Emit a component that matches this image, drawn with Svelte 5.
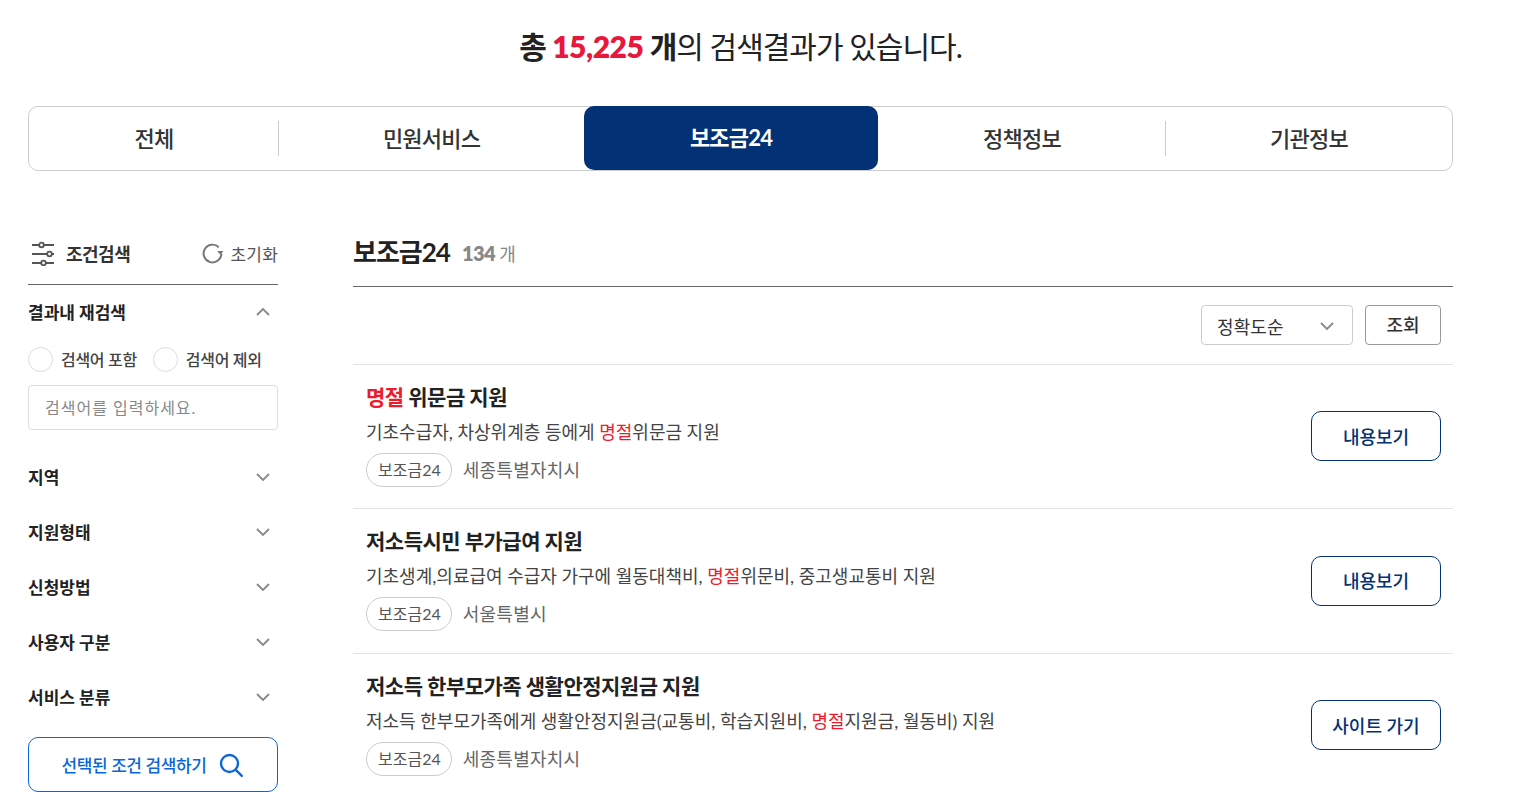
<script>
  const tabs = ['전체', '민원서비스', '보조금24', '정책정보', '기관정보'];
  const filters = ['지역', '지원형태', '신청방법', '사용자 구분', '서비스 분류'];
  const results = [
    {
      title: [['명절', true], [' 위문금 지원', false]],
      desc: [['기초수급자, 차상위계층 등에게 ', false], ['명절', true], ['위문금 지원', false]],
      org: '세종특별자치시',
      action: '내용보기'
    },
    {
      title: [['저소득시민 부가급여 지원', false]],
      desc: [['기초생계,의료급여 수급자 가구에 월동대책비, ', false], ['명절', true], ['위문비, 중고생교통비 지원', false]],
      org: '서울특별시',
      action: '내용보기'
    },
    {
      title: [['저소득 한부모가족 생활안정지원금 지원', false]],
      desc: [['저소득 한부모가족에게 생활안정지원금(교통비, 학습지원비, ', false], ['명절', true], ['지원금, 월동비) 지원', false]],
      org: '세종특별자치시',
      action: '사이트 가기'
    }
  ];
</script>

<div class="page">
  <h1><b>총 <em>15,225</em> 개</b>의 검색결과가 있습니다.</h1>

  <nav class="tabs">
    {#each tabs as tab, i}
      <div class="tab" class:active={i === 2} class:sep={i === 1 || i === 4}>{tab}</div>
    {/each}
  </nav>

  <div class="columns">
    <aside>
      <div class="side-head">
        <svg class="sliders" width="26" height="26" viewBox="0 -1 26 26" fill="none" stroke="#555" stroke-width="2">
          <path d="M2 4h7M14 4h10M2 13h15M22 13h2M2 22h9M16 22h8" />
          <circle cx="11.500" cy="4" r="2.300" stroke-width="1.800" />
          <circle cx="19.500" cy="13" r="2.300" stroke-width="1.800" />
          <circle cx="13.500" cy="22" r="2.300" stroke-width="1.800" />
        </svg>
        <strong>조건검색</strong>
        <span class="reset">
          <svg width="23" height="23" viewBox="0 0 22 22" fill="none">
            <path d="M17 5A8.500 8.500 0 1 0 19.500 11" stroke="#777" stroke-width="1.900" />
            <path d="M15.500 8.500h6l-3 3.800z" fill="#777" />
          </svg>
          초기화
        </span>
      </div>

      <div class="filter first">
        <span>결과내 재검색</span>
        <svg width="16" height="10" viewBox="0 0 16 10" fill="none" stroke="#888" stroke-width="1.800"><path d="M2 8l6-6 6 6" /></svg>
      </div>
      <div class="radios">
        <i class="radio"></i><span>검색어 포함</span>
        <i class="radio second"></i><span>검색어 제외</span>
      </div>
      <div class="search-input">검색어를 입력하세요.</div>

      <div class="filter-list">
        {#each filters as f}
          <div class="filter">
            <span>{f}</span>
            <svg width="16" height="10" viewBox="0 0 16 10" fill="none" stroke="#888" stroke-width="1.800"><path d="M2 2l6 6 6-6" /></svg>
          </div>
        {/each}
      </div>

      <button class="apply">
        선택된 조건 검색하기
        <svg width="26" height="26" viewBox="0 0 26 26" fill="none" stroke="#0b66d8" stroke-width="2.400" stroke-linecap="round">
          <circle cx="11.500" cy="11.500" r="8.500" />
          <path d="M17.800 17.800l6 6" />
        </svg>
      </button>
    </aside>

    <main>
      <div class="main-head">
        <h2>보조금24</h2>
        <span class="count">134 <small>개</small></span>
      </div>

      <div class="sort-bar">
        <div class="select">
          정확도순
          <svg width="16" height="10" viewBox="0 0 16 10" fill="none" stroke="#888" stroke-width="1.800"><path d="M2 2l6 6 6-6" /></svg>
        </div>
        <button class="lookup">조회</button>
      </div>

      {#each results as r}
        <article>
          <div class="body">
            <h3>{#each r.title as [t, hit]}{#if hit}<mark>{t}</mark>{:else}{t}{/if}{/each}</h3>
            <p>{#each r.desc as [t, hit]}{#if hit}<mark>{t}</mark>{:else}{t}{/if}{/each}</p>
            <div class="meta">
              <span class="chip">보조금24</span>
              <span class="org">{r.org}</span>
            </div>
          </div>
          <button class="action">{r.action}</button>
        </article>
      {/each}
    </main>
  </div>
</div>

<style>
  :global(body) {
    margin: 0;
    background: #fff;
  }

  .page {
    box-sizing: border-box;
    width: 1425px;
    height: 792px;
    margin-left: 28px;
    overflow: hidden;
    font-family: Lato, "Noto Sans CJK KR", sans-serif;
    color: #222;
    letter-spacing: -0.5px;
  }

  h1 {
    margin: 0;
    height: 106px;
    padding-top: 26px;
    box-sizing: border-box;
    text-align: center;
    font-size: 30px;
    line-height: 40px;
    font-weight: 400;
    letter-spacing: -1px;
  }

  h1 b {
    font-weight: 700;
  }

  h1 em {
    font-style: normal;
    font-weight: 800;
    letter-spacing: -0.500px;
    color: #e8173c;
  }

  .tabs {
    display: grid;
    grid-template-columns: 250px 305px 294px 288px 1fr;
    height: 65px;
    box-sizing: border-box;
    border: 1px solid #ccc;
    border-radius: 10px;
  }

  .tab {
    position: relative;
    display: flex;
    align-items: center;
    justify-content: center;
    padding-bottom: 4px;
    font-size: 22px;
    font-weight: 500;
    color: #333;
    letter-spacing: -0.8px;
  }

  .tab.active {
    margin-top: -1px;
    background: #033176;
    color: #fff;
    border-radius: 10px;
    font-weight: 700;
  }

  .tab.sep::before {
    content: "";
    position: absolute;
    left: -1px;
    top: 14px;
    bottom: 14px;
    width: 1px;
    background: #ccc;
  }

  .columns {
    display: flex;
    gap: 75px;
    padding-top: 60px;
  }

  aside {
    flex: 0 0 250px;
  }

  .side-head {
    display: flex;
    align-items: center;
    height: 54px;
    border-bottom: 1px solid #666;
    box-sizing: border-box;
    padding: 0 0 10px 2px;
  }

  .side-head strong {
    margin-left: 10px;
    font-size: 18px;
    font-weight: 700;
    color: #333;
  }

  .reset {
    display: flex;
    align-items: center;
    gap: 6px;
    margin-left: auto;
    padding-top: 2px;
    font-size: 17px;
    letter-spacing: 0.200px;
    color: #555;
  }

  .filter {
    display: flex;
    justify-content: space-between;
    align-items: center;
    height: 55px;
    padding-right: 7px;
    font-size: 17px;
    font-weight: 700;
    letter-spacing: 0;
    color: #222;
  }

  .filter.first {
    height: 53px;
  }

  .radios {
    display: flex;
    align-items: center;
    height: 24px;
    margin-top: 9px;
    font-size: 16px;
    font-weight: 500;
    letter-spacing: -0.300px;
    color: #444;
  }

  .radio {
    box-sizing: border-box;
    width: 25px;
    height: 25px;
    margin-right: 8px;
    border: 1px solid #ddd;
    border-radius: 50%;
  }

  .radio.second {
    margin-left: 16px;
    margin-right: 8px;
  }

  .search-input {
    box-sizing: border-box;
    height: 45px;
    margin-top: 14px;
    padding: 0 0 2px 16px;
    display: flex;
    align-items: center;
    border: 1px solid #ddd;
    border-radius: 4px;
    font-size: 16px;
    letter-spacing: 1px;
    color: #888;
  }

  .filter-list {
    margin-top: 19px;
  }

  .apply {
    box-sizing: border-box;
    width: 250px;
    height: 55px;
    margin-top: 13px;
    display: flex;
    align-items: center;
    justify-content: center;
    gap: 12px;
    padding-right: 6px;
    background: #fff;
    border: 1px solid #0b66d8;
    border-radius: 10px;
    font: inherit;
    font-size: 17px;
    font-weight: 500;
    letter-spacing: -0.400px;
    color: #0b66d8;
  }

  main {
    flex: 1;
  }

  .main-head {
    display: flex;
    align-items: center;
    gap: 12px;
    height: 56px;
    box-sizing: border-box;
    padding-bottom: 14px;
    border-bottom: 1px solid #666;
  }

  h2 {
    margin: -2px 0 0;
    font-size: 26px;
    font-weight: 700;
    letter-spacing: -1px;
  }

  .count {
    font-size: 20px;
    font-weight: 800;
    color: #888;
    padding-top: 3px;
  }

  .count small {
    font-size: 18px;
    font-weight: 400;
  }

  .sort-bar {
    display: flex;
    justify-content: flex-end;
    align-items: center;
    gap: 12px;
    height: 77.500px;
    box-sizing: border-box;
    padding: 0 12px 1px 0;
    border-bottom: 1px solid #e2e2e2;
  }

  .select {
    box-sizing: border-box;
    width: 152px;
    height: 40px;
    padding: 2px 17px 0 15px;
    display: flex;
    align-items: center;
    justify-content: space-between;
    border: 1px solid #ccc;
    border-radius: 4px;
    font-size: 18px;
    letter-spacing: 0.100px;
    color: #333;
  }

  .lookup {
    box-sizing: border-box;
    width: 76px;
    height: 40px;
    background: #fff;
    border: 1px solid #999;
    border-radius: 4px;
    font: inherit;
    font-size: 18px;
    font-weight: 500;
    letter-spacing: 0;
    color: #333;
    padding-bottom: 3px;
  }

  article {
    display: flex;
    align-items: center;
    justify-content: space-between;
    box-sizing: border-box;
    height: 144.500px;
    padding: 0 12px 0 13px;
    border-bottom: 1px solid #e2e2e2;
  }

  .body {
    padding-bottom: 4px;
  }

  h3 {
    margin: 0;
    font-size: 21px;
    line-height: 30px;
    font-weight: 700;
    color: #222;
  }

  mark {
    background: none;
    color: #ec1c2c;
  }

  p {
    margin: 5px 0 0;
    font-size: 18px;
    line-height: 30px;
    letter-spacing: 0;
    color: #444;
  }

  .meta {
    display: flex;
    align-items: center;
    gap: 11px;
    margin-top: 6px;
  }

  .chip {
    box-sizing: border-box;
    height: 34px;
    padding: 0 10px 2px 11px;
    display: flex;
    align-items: center;
    border: 1px solid #ccc;
    border-radius: 17px;
    font-size: 16px;
    letter-spacing: 0;
    color: #555;
  }

  .org {
    padding-bottom: 2px;
    font-size: 18px;
    letter-spacing: 0.250px;
    color: #666;
  }

  .action {
    box-sizing: border-box;
    width: 130px;
    height: 50px;
    padding-bottom: 2px;
    background: #fff;
    border: 1px solid #033176;
    border-radius: 10px;
    font: inherit;
    font-size: 18px;
    font-weight: 500;
    color: #033176;
  }
</style>
